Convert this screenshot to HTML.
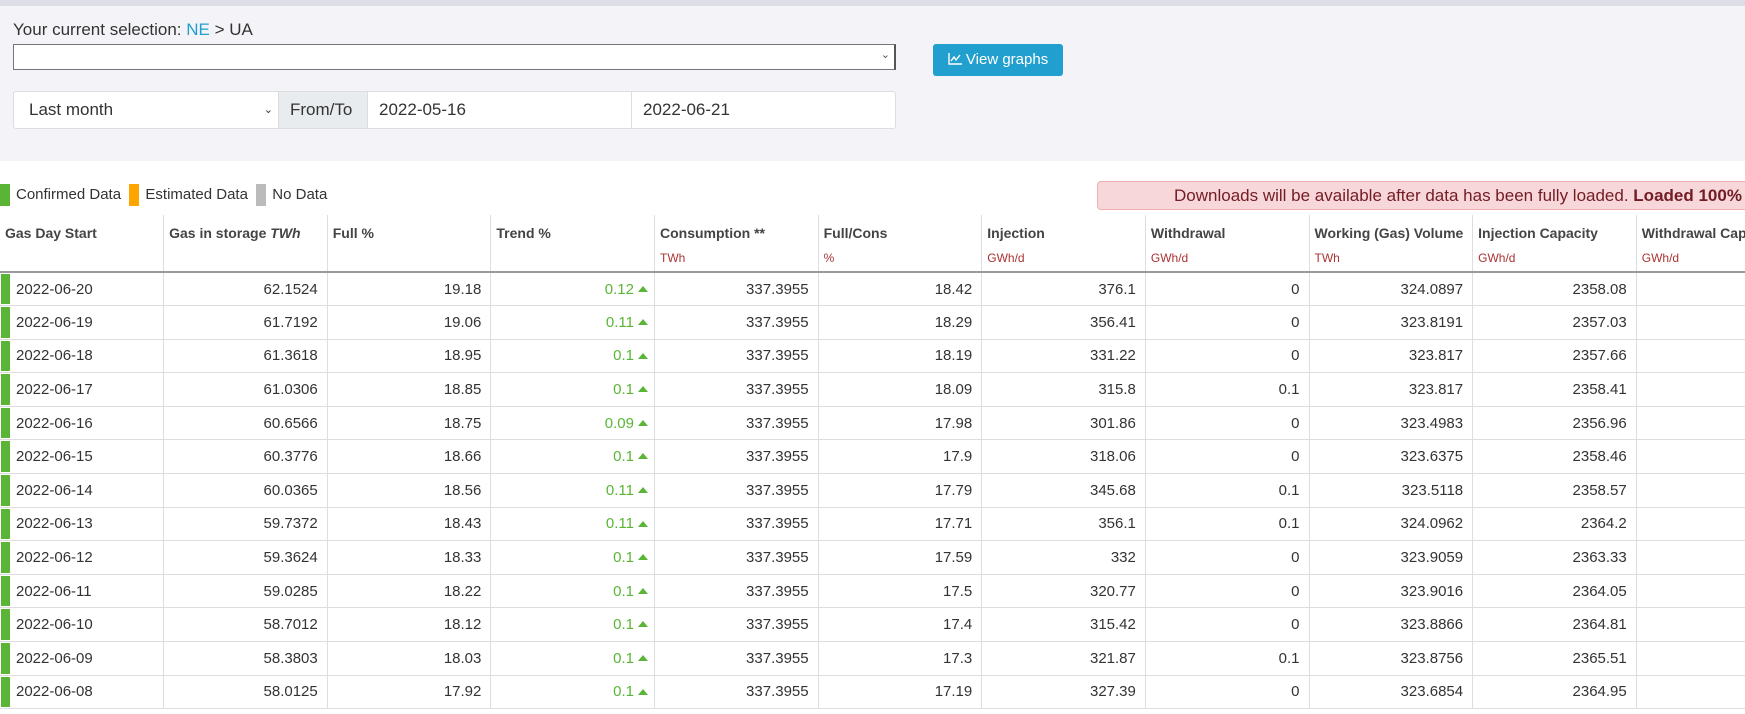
<!DOCTYPE html>
<html><head><meta charset="utf-8"><style>
*{box-sizing:border-box;margin:0;padding:0}
body{width:1745px;height:714px;overflow:hidden;background:#fff;font-family:"Liberation Sans",Arial,sans-serif;color:#333;position:relative}
.top{position:absolute;left:0;top:0;width:1745px;height:161px;background:#f4f4f8;border-top:6px solid #dcdde6}
.abs{position:absolute}
.sel{left:13px;top:44px;width:883px;height:26px;background:#fff;border:1px solid #767676;border-right:2px solid #555}
.btn{left:933px;top:44px;width:130px;height:32px;background:#219fcf;border-radius:3px;color:#fff;font-size:15px;line-height:32px;text-align:center}
.grp{left:13px;top:91px;width:883px;height:38px;border:1px solid #ddd;background:#fff;display:flex;font-size:17px;border-radius:3px}
.grp div{height:100%;line-height:36px;padding-left:15px;border-right:1px solid #ddd}
.leg{top:184px;height:22px;font-size:15px;line-height:22px;display:flex;left:0}
.leg span{display:inline-block;width:10px;height:22px;margin-right:6px}
.alert{left:1097px;top:181px;width:700px;height:29px;background:#f8d7da;border:1px solid #f1aeb5;border-radius:4px;color:#721c24;font-size:17px;line-height:27px;padding-left:76px;white-space:nowrap}
table{position:absolute;left:0;top:215px;border-collapse:collapse;table-layout:fixed;width:1800px}
td,th{width:163.6px;border-left:1px solid #ddd;font-size:15px;white-space:nowrap;overflow:hidden}
th{height:57px;text-align:left;vertical-align:top;padding:10px 6px 0 5px;font-size:14px;color:#444;border-bottom:2px solid #999}
th i{font-weight:bold}
th small{display:block;color:#a33;font-weight:normal;font-size:12px;margin-top:10px}
td{height:33.6px;text-align:right;padding-right:9px;border-bottom:1px solid #ddd}
td:first-child{text-align:left;padding-left:16px;position:relative;border-left:none}
td:first-child:before{content:"";position:absolute;left:1px;top:1px;bottom:1px;width:9px;background:#5ab536}
th:first-child{border-left:none}
.g{color:#5ab536;padding-right:20px;position:relative}
.g:after{content:"";position:absolute;right:6px;top:13px;border:5px solid transparent;border-bottom:6px solid #5ab536;border-top:0}
</style></head><body>
<div class="top"></div>
<div class="abs" style="left:13px;top:20px;font-size:17px">Your current selection: <span style="color:#219fcf">NE</span> &gt; UA</div>
<div class="abs sel"><span style="position:absolute;right:4px;top:3px;font-size:11px;color:#555">&#8964;</span></div>
<div class="abs btn"><svg width="14" height="12" viewBox="0 0 14 12" style="vertical-align:-1px"><path d="M1 0V11H14M3 8L6 4L8 7L12 2" fill="none" stroke="#fff" stroke-width="1.4"/></svg> View graphs</div>
<div class="abs grp"><div style="width:265px;position:relative">Last month<span style="position:absolute;right:5px;top:0;font-size:11px">&#8964;</span></div><div style="width:89px;background:#e9ecef;padding-left:11px">From/To</div><div style="width:264px;padding-left:11px">2022-05-16</div><div style="flex:1;border:none;padding-left:11px">2022-06-21</div></div>
<div class="abs leg"><span style="background:#5ab536"></span>Confirmed Data&nbsp;&nbsp;<span style="background:#ffa500"></span>Estimated Data&nbsp;&nbsp;<span style="background:#bbb"></span>No Data</div>
<div class="abs alert">Downloads will be available after data has been fully loaded. <b>Loaded 100%</b></div>
<table>
<tr><th>Gas Day Start</th><th>Gas in storage <i>TWh</i></th><th>Full %</th><th>Trend %</th><th>Consumption **<small>TWh</small></th><th>Full/Cons<small>%</small></th><th>Injection<small>GWh/d</small></th><th>Withdrawal<small>GWh/d</small></th><th>Working (Gas) Volume<small>TWh</small></th><th>Injection Capacity<small>GWh/d</small></th><th>Withdrawal Capacity<small>GWh/d</small></th></tr>
<tr><td>2022-06-20</td><td>62.1524</td><td>19.18</td><td class="g">0.12</td><td>337.3955</td><td>18.42</td><td>376.1</td><td>0</td><td>324.0897</td><td>2358.08</td><td></td></tr>
<tr><td>2022-06-19</td><td>61.7192</td><td>19.06</td><td class="g">0.11</td><td>337.3955</td><td>18.29</td><td>356.41</td><td>0</td><td>323.8191</td><td>2357.03</td><td></td></tr>
<tr><td>2022-06-18</td><td>61.3618</td><td>18.95</td><td class="g">0.1</td><td>337.3955</td><td>18.19</td><td>331.22</td><td>0</td><td>323.817</td><td>2357.66</td><td></td></tr>
<tr><td>2022-06-17</td><td>61.0306</td><td>18.85</td><td class="g">0.1</td><td>337.3955</td><td>18.09</td><td>315.8</td><td>0.1</td><td>323.817</td><td>2358.41</td><td></td></tr>
<tr><td>2022-06-16</td><td>60.6566</td><td>18.75</td><td class="g">0.09</td><td>337.3955</td><td>17.98</td><td>301.86</td><td>0</td><td>323.4983</td><td>2356.96</td><td></td></tr>
<tr><td>2022-06-15</td><td>60.3776</td><td>18.66</td><td class="g">0.1</td><td>337.3955</td><td>17.9</td><td>318.06</td><td>0</td><td>323.6375</td><td>2358.46</td><td></td></tr>
<tr><td>2022-06-14</td><td>60.0365</td><td>18.56</td><td class="g">0.11</td><td>337.3955</td><td>17.79</td><td>345.68</td><td>0.1</td><td>323.5118</td><td>2358.57</td><td></td></tr>
<tr><td>2022-06-13</td><td>59.7372</td><td>18.43</td><td class="g">0.11</td><td>337.3955</td><td>17.71</td><td>356.1</td><td>0.1</td><td>324.0962</td><td>2364.2</td><td></td></tr>
<tr><td>2022-06-12</td><td>59.3624</td><td>18.33</td><td class="g">0.1</td><td>337.3955</td><td>17.59</td><td>332</td><td>0</td><td>323.9059</td><td>2363.33</td><td></td></tr>
<tr><td>2022-06-11</td><td>59.0285</td><td>18.22</td><td class="g">0.1</td><td>337.3955</td><td>17.5</td><td>320.77</td><td>0</td><td>323.9016</td><td>2364.05</td><td></td></tr>
<tr><td>2022-06-10</td><td>58.7012</td><td>18.12</td><td class="g">0.1</td><td>337.3955</td><td>17.4</td><td>315.42</td><td>0</td><td>323.8866</td><td>2364.81</td><td></td></tr>
<tr><td>2022-06-09</td><td>58.3803</td><td>18.03</td><td class="g">0.1</td><td>337.3955</td><td>17.3</td><td>321.87</td><td>0.1</td><td>323.8756</td><td>2365.51</td><td></td></tr>
<tr><td>2022-06-08</td><td>58.0125</td><td>17.92</td><td class="g">0.1</td><td>337.3955</td><td>17.19</td><td>327.39</td><td>0</td><td>323.6854</td><td>2364.95</td><td></td></tr>
</table>
</body></html>
